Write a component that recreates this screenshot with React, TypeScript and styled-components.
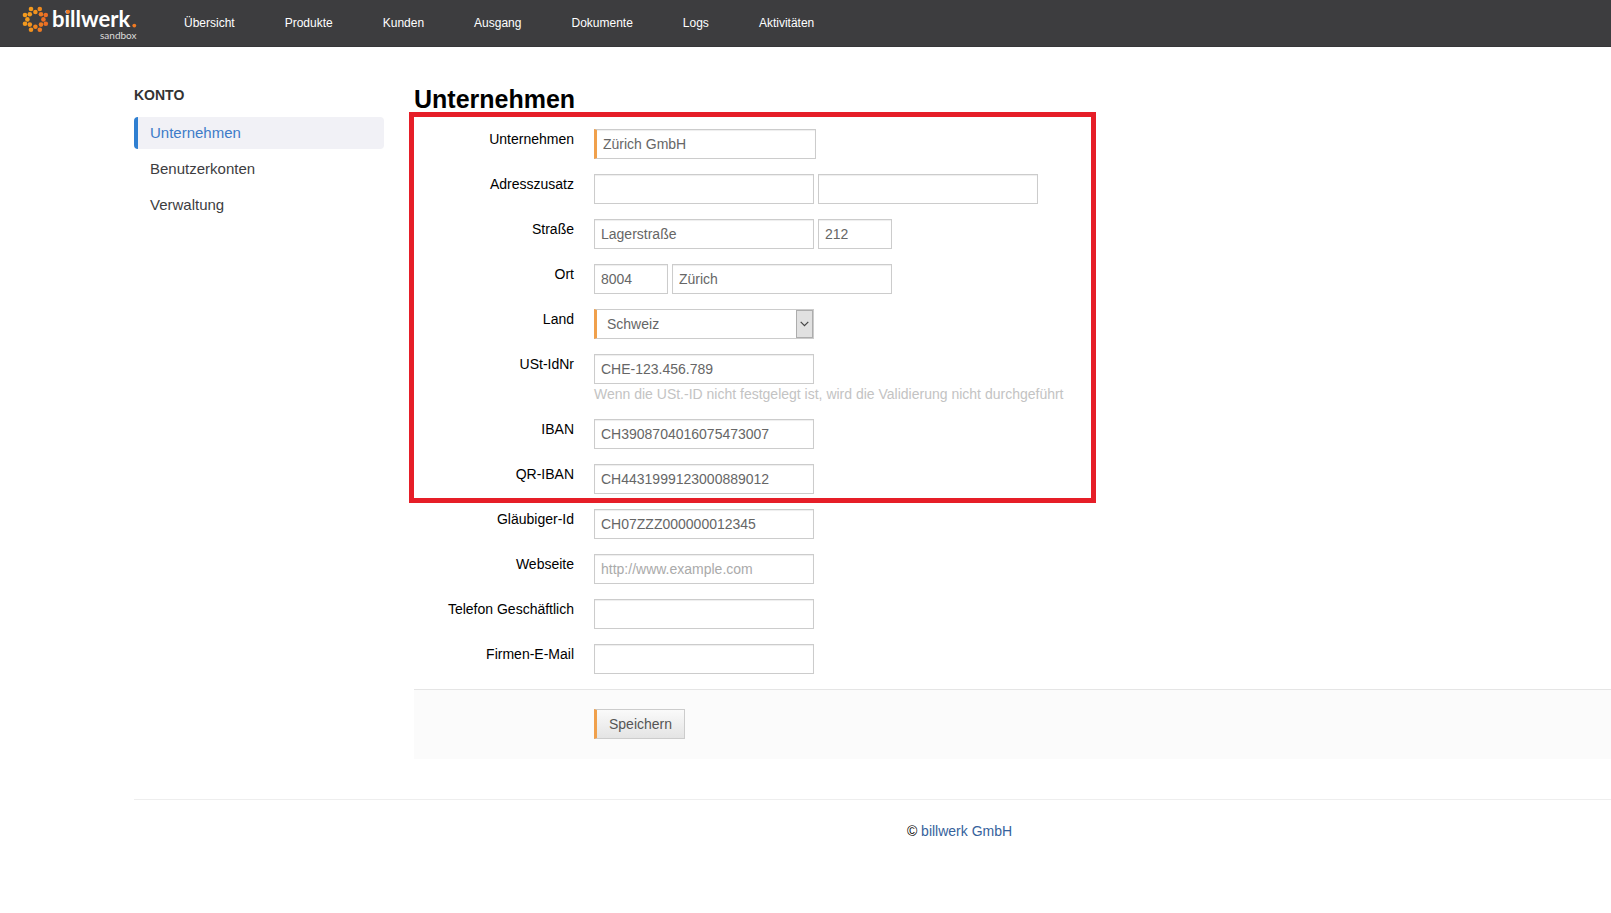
import React from "react";
import styled, { createGlobalStyle } from "styled-components";

const GlobalStyle = createGlobalStyle`
  *, *::before, *::after { box-sizing: border-box; }
  html { background: #fff; }
  body {
    margin: 0;
    color: #000;
    font-family: "Liberation Sans", Arial, sans-serif;
    font-size: 14px;
    line-height: 20px;
    overflow-x: hidden;
  }
`;

const TopBar = styled.header`
  display: flex;
  align-items: flex-start;
  height: 47px;
  padding-left: 22px;
  background: #3d3d3f;
  border-bottom: 1px solid #363638;
`;

const Brand = styled.a`
  display: block;
  width: 162px;
  height: 46px;
`;

const Nav = styled.nav`
  display: flex;
  gap: 50px;
  padding-top: 13px;
`;

const NavLink = styled.a`
  color: #fff;
  font-size: 12px;
  line-height: 20px;
  text-decoration: none;
`;

const Page = styled.div`
  padding-left: 134px;
`;

const Columns = styled.div`
  display: grid;
  grid-template-columns: 250px minmax(0, 1fr);
  column-gap: 30px;
  padding-top: 38px;
`;

const SideTitle = styled.h2`
  margin: 0 0 12px;
  color: #333;
  font-size: 14px;
  line-height: 20px;
`;

const SideList = styled.ul`
  display: flex;
  flex-direction: column;
  gap: 4px;
  margin: 0;
  padding: 0;
  list-style: none;
`;

const SideLink = styled.a<{ $active?: boolean }>`
  display: block;
  padding: 6px 12px;
  border-left: 4px solid ${(p) => (p.$active ? "#2f7fd1" : "transparent")};
  border-radius: 4px;
  background: ${(p) => (p.$active ? "#f1f1f6" : "transparent")};
  color: ${(p) => (p.$active ? "#3d7cc9" : "#3d3d3f")};
  font-size: 15px;
  line-height: 20px;
  text-decoration: none;
`;

const Title = styled.h1`
  margin: 0 0 -2px;
  font-size: 25px;
  line-height: 29px;
`;

const Highlight = styled.div`
  width: 687px;
  max-width: 100%;
  margin: 0 0 6px -5px;
  padding: 12px 0 4px;
  border: 5px solid #e61e28;
`;

const Rows = styled.div`
  display: flex;
  flex-direction: column;
  gap: 15px;
`;

const Row = styled.div`
  display: grid;
  grid-template-columns: 160px minmax(0, 1fr);
  column-gap: 20px;
`;

const Label = styled.label`
  text-align: right;
`;

const Fields = styled.div`
  display: flex;
  gap: 4px;
`;

const Help = styled.p`
  margin: 0;
  color: #c3c3c3;
`;

const Input = styled.input<{ $small?: boolean; $required?: boolean }>`
  width: ${(p) => (p.$small ? "74px" : p.$required ? "222px" : "220px")};
  height: 30px;
  padding: 4px 6px;
  border: 1px solid #ccc;
  border-left: ${(p) => (p.$required ? "3px solid #f0a04b" : "1px solid #ccc")};
  border-radius: 0;
  background: #fff;
  box-shadow: inset 0 1px 1px rgba(0, 0, 0, 0.07);
  color: #666;
  font: inherit;

  &::placeholder { color: #aaa; opacity: 1; }
`;

const SelectBox = styled.div`
  display: grid;
  align-items: center;
  width: 220px;

  & > * { grid-area: 1 / 1; }
`;

const Select = styled.select`
  width: 100%;
  height: 30px;
  padding: 4px 20px 4px 10px;
  border: 1px solid #ccc;
  border-left: 3px solid #f0a04b;
  border-radius: 0;
  background: #fff;
  color: #666;
  font: inherit;
  appearance: none;
`;

const Arrow = styled.span`
  display: grid;
  place-items: center;
  justify-self: end;
  width: 17px;
  height: 28px;
  margin-right: 1px;
  border: 1px solid #adadad;
  background: #e1e1e1;
  pointer-events: none;
`;

const Actions = styled.div`
  margin-top: 15px;
  padding: 19px 0 20px 180px;
  border-top: 1px solid #e5e5e5;
  background: #fbfbfb;
`;

const SaveButton = styled.button`
  display: block;
  height: 30px;
  padding: 4px 12px;
  border: 1px solid #ccc;
  border-left: 3px solid #f0a04b;
  background: linear-gradient(#fafafa, #e4e4e4);
  color: #555;
  font: inherit;
`;

const Footer = styled.footer`
  margin-top: 40px;
  padding: 21px 0 20px 174px;
  border-top: 1px solid #eee;
  text-align: center;
`;

const FooterLink = styled.a`
  color: #36629c;
  text-decoration: none;
`;

const dots = [
  [31, 9, "#f39a1e"], [39.8, 9, "#f08a1e"], [35.4, 12, "#f3931e"],
  [25, 15, "#f39a1e"], [29.8, 14.2, "#f39a1e"], [41, 14.2, "#ee7a22"], [45.8, 15, "#ec6e24"],
  [27.4, 19.4, "#f39a1e"], [43.4, 19.4, "#ec6e24"],
  [25, 23.8, "#f39a1e"], [29.8, 24.6, "#f3931e"], [41, 24.6, "#ee7a22"], [45.8, 23.8, "#ec6e24"],
  [35.4, 26.8, "#f0841e"], [31, 29.8, "#f3931e"], [39.8, 29.8, "#ee7a22"],
] as const;

const Logo = () => (
  <svg width="118" height="46" viewBox="22 0 118 46" role="img" aria-label="billwerk sandbox">
    {dots.map(([x, y, c]) => <circle key={`${x}-${y}`} cx={x} cy={y} r="2.3" fill={c} />)}
    <text x="52" y="27" fill="#fff" fontFamily="Lato, sans-serif" fontWeight="700" fontSize="22">billwerk</text>
    <circle cx="134.3" cy="25.6" r="1.9" fill="#f07a22" />
    <circle cx="67.9" cy="11.8" r="2.1" fill="#f07a22" />
    <text x="100" y="39" fill="#ddd" fontFamily="Lato, sans-serif" fontSize="10">sandbox</text>
  </svg>
);

const navItems = ["Übersicht", "Produkte", "Kunden", "Ausgang", "Dokumente", "Logs", "Aktivitäten"];
const sideItems = ["Unternehmen", "Benutzerkonten", "Verwaltung"];

const Field = ({ id, label, help, children }: { id: string; label: string; help?: string; children: React.ReactNode }) => (
  <Row>
    <Label htmlFor={id}>{label}</Label>
    <div>
      <Fields>{children}</Fields>
      {help && <Help>{help}</Help>}
    </div>
  </Row>
);

export default function App() {
  return (
    <>
      <GlobalStyle />
      <TopBar>
        <Brand href="#"><Logo /></Brand>
        <Nav>{navItems.map((n) => <NavLink key={n} href="#">{n}</NavLink>)}</Nav>
      </TopBar>
      <Page>
        <Columns>
          <aside>
            <SideTitle>KONTO</SideTitle>
            <SideList>
              {sideItems.map((s, i) => <li key={s}><SideLink href="#" $active={i === 0}>{s}</SideLink></li>)}
            </SideList>
          </aside>
          <main>
            <Title>Unternehmen</Title>
            <form>
              <Highlight>
                <Rows>
                  <Field id="company" label="Unternehmen"><Input id="company" $required defaultValue="Zürich GmbH" /></Field>
                  <Field id="extra" label="Adresszusatz">
                    <Input id="extra" /><Input aria-label="Adresszusatz 2" />
                  </Field>
                  <Field id="street" label="Straße">
                    <Input id="street" defaultValue="Lagerstraße" /><Input aria-label="Hausnummer" $small defaultValue="212" />
                  </Field>
                  <Field id="zip" label="Ort">
                    <Input id="zip" $small defaultValue="8004" /><Input aria-label="Ortsname" defaultValue="Zürich" />
                  </Field>
                  <Field id="country" label="Land">
                    <SelectBox>
                      <Select id="country"><option>Schweiz</option></Select>
                      <Arrow>
                        <svg width="9" height="6" viewBox="0 0 9 6" fill="none" stroke="#444" strokeWidth="1.2"><path d="M.7.8 4.5 4.6 8.3.8" /></svg>
                      </Arrow>
                    </SelectBox>
                  </Field>
                  <Field id="vat" label="USt-IdNr" help="Wenn die USt.-ID nicht festgelegt ist, wird die Validierung nicht durchgeführt">
                    <Input id="vat" defaultValue="CHE-123.456.789" />
                  </Field>
                  <Field id="iban" label="IBAN"><Input id="iban" defaultValue="CH3908704016075473007" /></Field>
                  <Field id="qriban" label="QR-IBAN"><Input id="qriban" defaultValue="CH4431999123000889012" /></Field>
                </Rows>
              </Highlight>
              <Rows>
                <Field id="creditor" label="Gläubiger-Id"><Input id="creditor" defaultValue="CH07ZZZ000000012345" /></Field>
                <Field id="web" label="Webseite"><Input id="web" placeholder="http://www.example.com" /></Field>
                <Field id="phone" label="Telefon Geschäftlich"><Input id="phone" type="tel" /></Field>
                <Field id="mail" label="Firmen-E-Mail"><Input id="mail" type="email" /></Field>
              </Rows>
              <Actions><SaveButton type="button">Speichern</SaveButton></Actions>
            </form>
          </main>
        </Columns>
        <Footer>© <FooterLink href="#">billwerk GmbH</FooterLink></Footer>
      </Page>
    </>
  );
}
